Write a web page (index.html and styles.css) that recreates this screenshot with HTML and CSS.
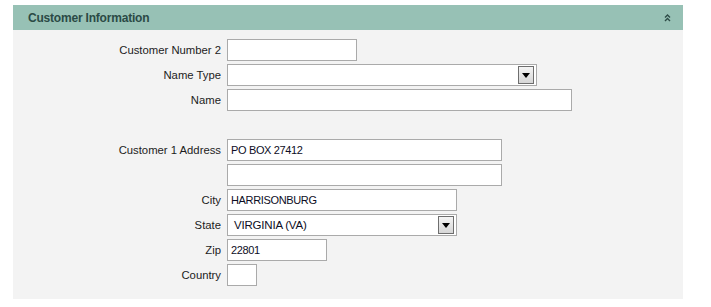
FILE: index.html
```html
<!DOCTYPE html>
<html lang="en">
<head>
    <meta charset="UTF-8">
    <title>Customer Information</title>
    <link rel="stylesheet" href="styles.css">
</head>
<body>
<div class="panel">
    <div class="panel-head">
        <span class="title">Customer Information</span>
        <svg class="collapse" width="7" height="9" viewBox="0 0 7 9">
            <path d="M1 4.5 L3.5 2 L6 4.5 M1 8 L3.5 5.5 L6 8" fill="none" stroke="#2e4c47" stroke-width="1.4"/>
        </svg>
    </div>
    <div class="panel-body">
        <label>Customer Number 2</label>
        <div class="field"><input class="w130" type="text"></div>

        <label>Name Type</label>
        <div class="field">
            <div class="select w310">
                <span class="val"></span>
                <span class="arrow"><svg width="8" height="5" viewBox="0 0 8 5"><path d="M0 0 H8 L4 5 Z" fill="#000"/></svg></span>
            </div>
        </div>

        <label>Name</label>
        <div class="field"><input class="w345" type="text"></div>

        <div class="spacer"></div>

        <label>Customer 1 Address</label>
        <div class="field"><input class="w275" type="text" value="PO BOX 27412"></div>

        <label></label>
        <div class="field"><input class="w275" type="text"></div>

        <label>City</label>
        <div class="field"><input class="w230" type="text" value="HARRISONBURG"></div>

        <label>State</label>
        <div class="field">
            <div class="select w230">
                <span class="val">VIRGINIA (VA)</span>
                <span class="arrow"><svg width="8" height="5" viewBox="0 0 8 5"><path d="M0 0 H8 L4 5 Z" fill="#000"/></svg></span>
            </div>
        </div>

        <label>Zip</label>
        <div class="field"><input class="w100" type="text" value="22801"></div>

        <label>Country</label>
        <div class="field"><input class="w30" type="text"></div>
    </div>
</div>
</body>
</html>
```

FILE: styles.css
```css
* {
    margin: 0;
    padding: 0;
    box-sizing: border-box;
}

body {
    background: #fff;
    font-family: "Liberation Sans", Arial, sans-serif;
    font-size: 11px;
    color: #1c1c1c;
}

.panel {
    width: 670px;
    margin: 5px 0 0 13px;
    background: #f3f3f3;
}

.panel-head {
    height: 25px;
    background: #97c1b5;
    display: flex;
    align-items: center;
    justify-content: space-between;
    padding: 0 12px 0 15px;
}

.panel-head .title {
    font-weight: bold;
    font-size: 12px;
    color: #2b4a45;
    letter-spacing: -0.2px;
}

.panel-head .collapse {
    display: block;
}

.panel-body {
    display: grid;
    grid-template-columns: 208px 1fr;
    column-gap: 6px;
    row-gap: 3px;
    padding: 9px 0 13px;
}

label {
    height: 22px;
    line-height: 22px;
    text-align: right;
    font-size: 11.3px;
}

.field {
    height: 22px;
}

.spacer {
    grid-column: 1 / 3;
    height: 22px;
}

input {
    display: block;
    height: 22px;
    border: 1px solid #aaaaaa;
    background: #fff;
    padding: 0 3px;
    font-family: "Liberation Sans", Arial, sans-serif;
    font-size: 11px;
    letter-spacing: -0.35px;
    color: #0d0d24;
    outline: none;
}

.select {
    height: 22px;
    border: 1px solid #aaaaaa;
    background: #fff;
    display: flex;
    align-items: center;
    justify-content: space-between;
    padding: 0 2px 0 6px;
    font-size: 11.5px;
    letter-spacing: -0.2px;
    color: #0d0d24;
}

.select .arrow {
    width: 16px;
    height: 18px;
    border: 1px solid #6e6e6e;
    background: linear-gradient(#f4f4f4, #d6d6d6);
    display: flex;
    align-items: center;
    justify-content: center;
}

.select .arrow svg {
    display: block;
}

.w30 { width: 30px; }
.w100 { width: 100px; }
.w130 { width: 130px; }
.w230 { width: 230px; }
.w275 { width: 275px; }
.w310 { width: 310px; }
.w345 { width: 345px; }
```
